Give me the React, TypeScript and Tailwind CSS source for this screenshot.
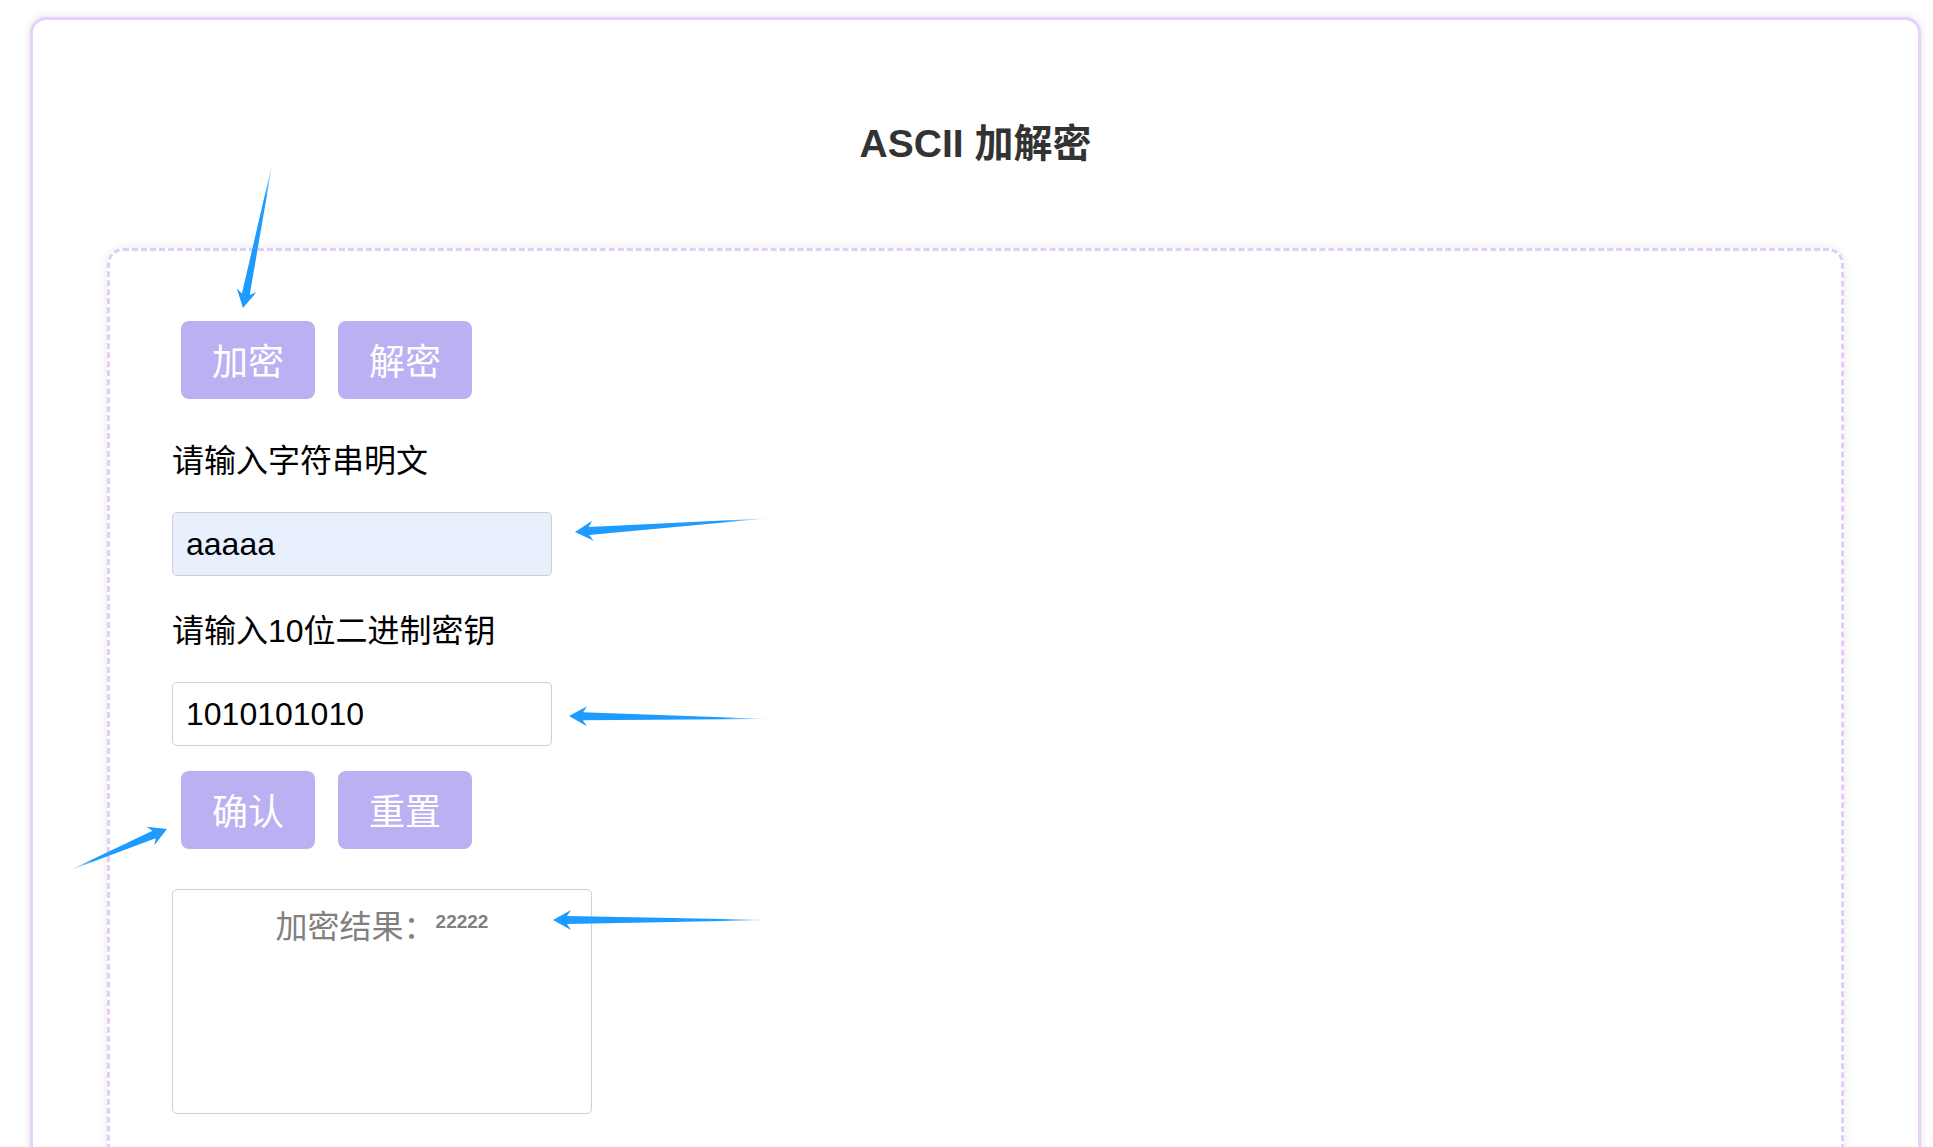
import React from "react";

type ArrowProps = { id: string; tx: number; ty: number; hx: number; hy: number; L?: number; W?: number; w?: number; notch?: number };

function Arrow({ id, tx, ty, hx, hy, L = 18, W = 10, w = 8, notch = 14 }: ArrowProps) {
  const dx = hx - tx;
  const dy = hy - ty;
  const len = Math.hypot(dx, dy);
  const ux = dx / len;
  const uy = dy / len;
  const nx = -uy;
  const ny = ux;
  const p = (x: number, y: number) => `${x.toFixed(1)},${y.toFixed(1)}`;
  const pts = [
    p(tx, ty),
    p(hx - ux * notch + (nx * w) / 2, hy - uy * notch + (ny * w) / 2),
    p(hx - ux * L + nx * W, hy - uy * L + ny * W),
    p(hx, hy),
    p(hx - ux * L - nx * W, hy - uy * L - ny * W),
    p(hx - ux * notch - (nx * w) / 2, hy - uy * notch - (ny * w) / 2),
  ].join(" ");
  return (
    <g>
      <defs>
        <linearGradient id={id} gradientUnits="userSpaceOnUse" x1={tx} y1={ty} x2={hx} y2={hy}>
          <stop offset="0" stopColor="#1e9bff" stopOpacity="0" />
          <stop offset="0.25" stopColor="#1e9bff" stopOpacity="1" />
          <stop offset="1" stopColor="#1e9bff" stopOpacity="1" />
        </linearGradient>
      </defs>
      <polygon points={pts} fill={`url(#${id})`} />
    </g>
  );
}

function PurpleButton({ children }: { children: React.ReactNode }) {
  return (
    <button className="w-[134px] h-[78px] rounded-[8px] bg-[#bbb0f2] text-white text-[36px] leading-[48px] pt-[6px] flex items-center justify-center">
      {children}
    </button>
  );
}

export default function App() {
  return (
    <div className="relative min-h-screen bg-white pl-[30px] pr-[12px] pt-[17px] font-['Liberation_Sans','Noto_Sans_CJK_SC',sans-serif] overflow-hidden h-[1147px]">
      <div className="rounded-[16px] border-[3px] border-[#e6d0fd] bg-white shadow-[0_0_10px_rgba(0,0,0,0.12)] px-[74px] pb-[300px]">
        <h1 className="mt-[102px] text-center text-[39px] leading-[44px] font-bold text-[#333333]">ASCII 加解密</h1>
        <div className="mt-[82px] rounded-[16px] border-[3px] border-dashed border-[#e3cbfd] shadow-[0_0_8px_rgba(0,0,0,0.1)] pl-[62px] pt-[70px] pb-[200px]">
          <div className="flex gap-[23px] ml-[9px]">
            <PurpleButton>加密</PurpleButton>
            <PurpleButton>解密</PurpleButton>
          </div>
          <div className="mt-[38px] text-[32px] leading-[48px] text-black">请输入字符串明文</div>
          <input
            defaultValue="aaaaa"
            className="mt-[27px] block w-[380px] h-[64px] rounded-[5px] border border-[#d0d0d0] bg-[#e8f0fe] pl-[13px] text-[32px] text-black outline-none"
          />
          <div className="mt-[31px] text-[32px] leading-[48px] text-black">请输入10位二进制密钥</div>
          <input
            defaultValue="1010101010"
            className="mt-[27px] block w-[380px] h-[64px] rounded-[5px] border border-[#d0d0d0] bg-white pl-[13px] text-[32px] text-black outline-none"
          />
          <div className="mt-[25px] flex gap-[23px] ml-[9px]">
            <PurpleButton>确认</PurpleButton>
            <PurpleButton>重置</PurpleButton>
          </div>
          <div className="mt-[40px] w-[420px] h-[225px] rounded-[5px] border border-[#d0d0d0] pt-[13px] text-center">
            <span className="text-[32px] leading-[48px] text-[#808080]">加密结果：</span>
            <span className="align-top text-[19px] leading-[38px] font-bold text-[#808080]">22222</span>
          </div>
        </div>
      </div>
      <svg className="absolute left-0 top-0 pointer-events-none" width="1933" height="1147">
        <Arrow id="a1" tx={273} ty={160} hx={243} hy={308} />
        <Arrow id="a2" tx={772} ty={518} hx={575} hy={532} />
        <Arrow id="a3" tx={772} ty={719} hx={569} hy={716} />
        <Arrow id="a4" tx={68} ty={871} hx={167} hy={829} />
        <Arrow id="a5" tx={772} ty={920} hx={553} hy={920} />
      </svg>
    </div>
  );
}
